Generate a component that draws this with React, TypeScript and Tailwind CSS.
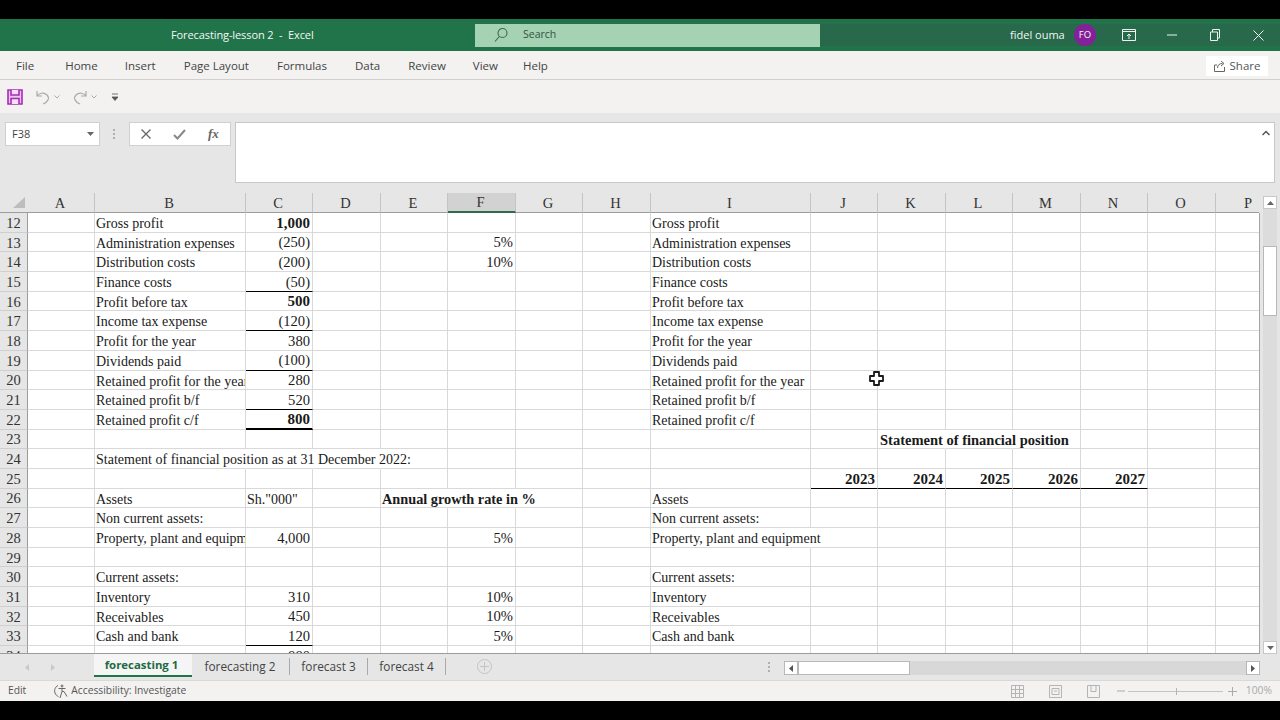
import React from "react";

const ui = "font-['Open_Sans','Noto_Sans',sans-serif]";
const cols = "grid grid-cols-[28px_67px_151px_67px_68px_67px_68px_67px_68px_160px_67px_68px_67px_68px_67px_68px_43px]";

type C = { t: string; r?: boolean; b?: boolean; clip?: boolean; line?: string; cls?: string; span?: number };
type Row = Record<number, C>;
// column index: 1 = A ... 16 = P; span = how many columns the text runs over, so the gridlines it crosses go away
const L = (t: string, span?: number): C => ({ t, span, cls: "pt-[1px]" });
const Clip = (t: string): C => ({ t, clip: true, cls: "pt-[1px]" });
const N = (t: string, line?: string, b?: boolean): C => ({ t, r: true, line, b, cls: b ? "pt-[0.6px] text-[15px]" : "pt-[0.6px] text-[14.6px]" });
const thin = "border-b border-b-black";
const thick = "border-b-2 border-b-black";

const rows: [number, Row][] = [
  [12, { 2: L("Gross profit"), 3: N("1,000", undefined, true), 9: L("Gross profit") }],
  [13, { 2: L("Administration expenses"), 3: N("(250)"), 6: N("5%"), 9: L("Administration expenses") }],
  [14, { 2: L("Distribution costs"), 3: N("(200)"), 6: N("10%"), 9: L("Distribution costs") }],
  [15, { 2: L("Finance costs"), 3: N("(50)", thin), 9: L("Finance costs") }],
  [16, { 2: L("Profit before tax"), 3: N("500", undefined, true), 9: L("Profit before tax") }],
  [17, { 2: L("Income tax expense"), 3: N("(120)", thin), 9: L("Income tax expense") }],
  [18, { 2: L("Profit for the year"), 3: N("380"), 9: L("Profit for the year") }],
  [19, { 2: L("Dividends paid"), 3: N("(100)", thin), 9: L("Dividends paid") }],
  [20, { 2: Clip("Retained profit for the year"), 3: N("280"), 9: L("Retained profit for the year") }],
  [21, { 2: L("Retained profit b/f"), 3: N("520", thin), 9: L("Retained profit b/f") }],
  [22, { 2: L("Retained profit c/f"), 3: N("800", thick, true), 9: L("Retained profit c/f") }],
  [23, { 11: { t: "Statement of financial position", b: true, span: 3, cls: "pl-[2px] pt-[1px] text-[14.5px]" } }],
  [24, { 2: L("Statement of financial position as at 31 December 2022:", 4) }],
  [25, { 10: N("2023", thin, true), 11: N("2024", thin, true), 12: N("2025", thin, true), 13: N("2026", thin, true), 14: N("2027", thin, true) }],
  [26, { 2: L("Assets"), 3: L('Sh."000"'), 5: { t: "Annual growth rate in %", b: true, span: 3, cls: "pt-[1px] text-[14.3px]" }, 9: L("Assets") }],
  [27, { 2: L("Non current assets:"), 9: L("Non current assets:") }],
  [28, { 2: Clip("Property, plant and equipment"), 3: N("4,000"), 6: N("5%"), 9: L("Property, plant and equipment", 2) }],
  [29, {}],
  [30, { 2: L("Current assets:"), 9: L("Current assets:") }],
  [31, { 2: L("Inventory"), 3: N("310"), 6: N("10%"), 9: L("Inventory") }],
  [32, { 2: L("Receivables"), 3: N("450"), 6: N("10%"), 9: L("Receivables") }],
  [33, { 2: L("Cash and bank"), 3: N("120", thin), 6: N("5%"), 9: L("Cash and bank") }],
  [34, { 3: N("880") }],
];

const letters = ["A", "B", "C", "D", "E", "F", "G", "H", "I", "J", "K", "L", "M", "N", "O", "P"];

function Cell({ c, last, covered }: { c?: C; last: boolean; covered: boolean }) {
  const line = c?.line ?? "border-b border-b-[#d9d9d9]";
  return (
    <div className={`h-[19.7px] min-w-0 ${last ? "" : covered ? "border-r border-r-transparent" : "border-r border-r-[#d9d9d9]"} ${line} ${c?.clip ? "overflow-hidden" : ""}`}>
      {c && c.t && (
        <div className={`whitespace-nowrap pl-[1px] pr-[2px] leading-[19px] ${c.r ? "text-right" : "text-left"} ${c.b ? "font-bold" : ""} ${c.cls ?? ""}`}>{c.t}</div>
      )}
    </div>
  );
}

function isCovered(row: Row, i: number) {
  // i is a column index; true when a text that starts at or before i runs past the right edge of i
  for (let s = 1; s <= i; s++) {
    const c = row[s];
    if (c?.span && i < s + c.span - 1) return true;
  }
  return false;
}

function TitleBar() {
  return (
    <div className={`flex h-[32px] items-center bg-[#21734a] text-[#f4f7f5] ${ui}`}>
      <div className="w-[475px] pl-[171px] text-[11px] tracking-[-0.1px]">Forecasting-lesson 2&nbsp; -&nbsp; Excel</div>
      <div className="flex h-[23px] w-[345px] items-center bg-[#a4d2b3] text-[#33523f]">
        <svg className="ml-[18px]" width="16" height="16" viewBox="0 0 16 16" fill="none" stroke="#3b6a4c" strokeWidth="1.1">
          <circle cx="9.5" cy="6" r="4.5" />
          <path d="M6.3 9.5 2 14.5" />
        </svg>
        <span className="ml-[14px] text-[10.5px]">Search</span>
      </div>
      <div className="flex flex-1 items-center bg-[#27694a]">
        <span className="ml-[190px] w-[55px] whitespace-nowrap text-[11px]">fidel ouma</span>
        <div className="ml-[9px] flex h-[22px] w-[22px] items-center justify-center rounded-full bg-[#84209a] text-[9.5px]">FO</div>
        <svg className="ml-[26px]" width="14" height="12" viewBox="0 0 14 12" fill="none" stroke="#eef3f0" strokeWidth="1">
          <path d="M.5.5h13v11H.5zM.5 2.500h13M7 10V5M5 7l2-2 2 2" />
        </svg>
        <svg className="ml-[31px]" width="10" height="2" viewBox="0 0 10 2"><path d="M0 1h10" stroke="#eef3f0" /></svg>
        <svg className="ml-[33px]" width="10" height="12" viewBox="0 0 10 12" fill="none" stroke="#eef3f0">
          <path d="M.5 3h7v8.500h-7zM2.500 3V.5h7v8.500H7.500" />
        </svg>
        <svg className="ml-[33px]" width="11" height="11" viewBox="0 0 11 11" fill="none" stroke="#f4f7f5"><path d="m.5.500 10 10M10.500.5l-10 10" /></svg>
      </div>
    </div>
  );
}

function Tabs() {
  const tabs: [string, string][] = [
    ["File", "ml-[16px]"], ["Home", "ml-[31px]"], ["Insert", "ml-[27px]"], ["Page Layout", "ml-[28px]"],
    ["Formulas", "ml-[28px]"], ["Data", "ml-[28px]"], ["Review", "ml-[28px]"], ["View", "ml-[27px]"], ["Help", "ml-[25px]"],
  ];
  return (
    <div className={`flex h-[29px] items-center border-b border-b-[#d2d0ce] bg-[#f3f2f1] pt-[1px] text-[11.5px] text-[#444] ${ui}`}>
      {tabs.map(([t, m]) => <span key={t} className={m}>{t}</span>)}
      <div className="ml-auto mr-[12px] flex h-[20px] w-[62px] items-center justify-center gap-[4px] bg-white text-[#555]">
        <svg width="12" height="12" viewBox="0 0 12 12" fill="none" stroke="#666"><path d="M3 5H.5v6.500h10V7M3.500 8c0-3 2-4.500 5-4.500M7 1l3 2.500L7 6" /></svg>
        <span>Share</span>
      </div>
    </div>
  );
}

function Qat() {
  return (
    <div className="flex h-[33px] items-center bg-[#f3f2f1]">
      <svg className="ml-[7px]" width="16" height="16" viewBox="0 0 16 16" fill="#edc4f2" stroke="#a72cb8" strokeWidth="1.600">
        <path d="M1 1h14v14H1z" /><path d="M4 1v5h8V1M4 15V9.500h8V15" fill="#f6e3f8" />
      </svg>
      <svg className="ml-[12px]" width="16" height="16" viewBox="0 0 16 16" fill="none" stroke="#aaa" strokeWidth="1.200">
        <path d="M2 2v5h5M2 7c2-3 7-4 10-1 3 3 1 7-4 9" />
      </svg>
      <svg className="ml-[3px]" width="6" height="4" viewBox="0 0 6 4" fill="none" stroke="#aaa"><path d="m.5.500 2.500 2.500L5.500.5" /></svg>
      <svg className="ml-[12px]" width="16" height="16" viewBox="0 0 16 16" fill="none" stroke="#aaa" strokeWidth="1.200">
        <path d="M14 2v5H9M14 7C12 4 7 3 4 6c-3 3-1 7 4 9" />
      </svg>
      <svg className="ml-[3px]" width="6" height="4" viewBox="0 0 6 4" fill="none" stroke="#aaa"><path d="m.5.500 2.500 2.500L5.500.5" /></svg>
      <svg className="ml-[14px]" width="8" height="8" viewBox="0 0 8 8"><path d="M1 1h6M1 4h6L4 7.500z" stroke="#555" fill="#555" strokeWidth=".8" /></svg>
    </div>
  );
}

function FormulaBar() {
  return (
    <div className={`flex h-[80px] items-start bg-[#e6e6e6] pt-[9px] ${ui}`}>
      <div className="ml-[5px] flex h-[24px] w-[95px] items-center border border-[#d0d0d0] bg-white pl-[6px] text-[11px] text-[#444]">
        F38
        <svg className="ml-auto mr-[5px]" width="7" height="4" viewBox="0 0 7 4"><path d="M0 0h7L3.500 4z" fill="#666" /></svg>
      </div>
      <div className="ml-[13px] mt-[7px] flex h-[10px] w-[2px] flex-col justify-between">
        <div className="h-[2px] bg-[#b0b0b0]" /><div className="h-[2px] bg-[#b0b0b0]" /><div className="h-[2px] bg-[#b0b0b0]" />
      </div>
      <div className="ml-[14px] flex h-[24px] w-[102px] items-center border border-[#d0d0d0] bg-white">
        <svg className="ml-[11px]" width="10" height="10" viewBox="0 0 10 10" fill="none" stroke="#666" strokeWidth="1.300"><path d="m.5.500 9 9M9.500.5l-9 9" /></svg>
        <svg className="ml-[22px]" width="13" height="11" viewBox="0 0 13 11" fill="none" stroke="#888" strokeWidth="2"><path d="m1 6 3.500 3.500L12 1" /></svg>
        <span className="ml-[22px] font-['Liberation_Serif',serif] text-[13px] font-bold italic text-[#666]">fx</span>
      </div>
      <div className="relative ml-[4px] h-[61px] w-[1040px] border border-[#c8c8c8] bg-white">
        <svg className="absolute right-[4px] top-[7px]" width="8" height="6" viewBox="0 0 8 6" fill="none" stroke="#555" strokeWidth="1.500"><path d="m.5 5 3.500-3.500L7.500 5" /></svg>
      </div>
    </div>
  );
}

function Sheet() {
  return (
    <div className="flex h-[461px] bg-[#e6e6e6] font-['Liberation_Serif',serif] text-[14px] text-[#1a1a1a]">
      <div className="h-full w-[1260px] overflow-hidden">
        <div className={`${cols} h-[20px] grid-rows-[20px]`}>
          <div className="flex items-start justify-end border-b border-b-[#9c9c9c] pr-[3px] pt-[4px]">
            <svg width="12" height="11" viewBox="0 0 12 11"><path d="M12 0v11H0z" fill="#bdbdbd" /></svg>
          </div>
          {letters.map((l) => (
            <div key={l} className={`flex items-center border-b text-[14.5px] leading-[16px] text-[#333] ${l === "P" ? "justify-start pl-[28px]" : "justify-center border-r border-r-[#c4c4c4] pr-[2px]"} ${l === "F" ? "border-b-2 border-b-[#2d6b4c] bg-[#d2d2d2]" : "border-b-[#9c9c9c]"}`}>{l}</div>
          ))}
        </div>
        <div className="h-[441px] overflow-hidden border-b border-r border-b-[#9c9c9c] border-r-[#a4a4a4] bg-white">
          {rows.map(([n, row]) => (
            <div key={n} className={cols}>
              <div className="flex h-[19.7px] items-center justify-center border-b border-r border-b-[#cfcfcf] border-r-[#9c9c9c] bg-[#e6e6e6] pt-[1px] text-[14.5px] leading-[16px] text-[#333]">{n}</div>
              {letters.map((_, i) => <Cell key={i} c={row[i + 1]} last={i === 15} covered={isCovered(row, i + 1)} />)}
            </div>
          ))}
        </div>
      </div>
      <div className="flex h-full w-[20px] flex-col items-center pt-[3px]">
        <div className="flex h-[13px] w-[14px] shrink-0 items-center justify-center border border-[#c8c8c8] bg-white">
          <svg width="7" height="4" viewBox="0 0 7 4"><path d="M3.500 0 7 4H0z" fill="#666" /></svg>
        </div>
        <div className="w-[14px] flex-1 bg-[#dcdcdc] pt-[37px]">
          <div className="h-[70px] w-[14px] border border-[#b8b8b8] bg-white" />
        </div>
        <div className="flex h-[13px] w-[14px] shrink-0 items-center justify-center border border-[#c8c8c8] bg-white">
          <svg width="7" height="4" viewBox="0 0 7 4"><path d="M0 0h7L3.500 4z" fill="#666" /></svg>
        </div>
      </div>
    </div>
  );
}

function SheetTabs() {
  return (
    <div className={`flex h-[26px] items-start bg-[#e6e6e6] text-[11.8px] text-[#444] ${ui}`}>
      <svg className="ml-[25px] mt-[10px]" width="4" height="7" viewBox="0 0 4 7"><path d="M4 0v7L0 3.500z" fill="#c8c8c8" /></svg>
      <svg className="ml-[22px] mt-[10px]" width="4" height="7" viewBox="0 0 4 7"><path d="M0 0v7l4-3.500z" fill="#c8c8c8" /></svg>
      <div className="ml-[39px] flex h-[23px] w-[98px] items-center justify-center border-b-2 border-b-[#21734a] bg-[#f5f5f5] pr-[3px] pt-[1px] text-[11.4px] font-bold text-[#1f6a44]">forecasting 1</div>
      <div className="mt-[4px] flex h-[17px] w-[98px] items-center justify-center border-r border-r-[#aaa] pr-[1px] pt-[1px]">forecasting 2</div>
      <div className="mt-[4px] flex h-[17px] w-[78px] items-center justify-center border-r border-r-[#aaa] pt-[1px]">forecast 3</div>
      <div className="mt-[4px] flex h-[17px] w-[78px] items-center justify-center border-r border-r-[#aaa] pt-[1px]">forecast 4</div>
      <div className="ml-[31px] mt-[5px] flex h-[15px] w-[15px] items-center justify-center rounded-full border border-[#c4c4c4] text-[#c4c4c4]">
        <svg width="9" height="9" viewBox="0 0 9 9"><path d="M4.500 0v9M0 4.500h9" stroke="#c4c4c4" /></svg>
      </div>
      <div className="ml-[276px] mt-[8px] flex h-[10px] w-[2px] flex-col justify-between">
        <div className="h-[2px] bg-[#b0b0b0]" /><div className="h-[2px] bg-[#b0b0b0]" /><div className="h-[2px] bg-[#b0b0b0]" />
      </div>
      <div className="ml-[14px] mt-[7px] flex h-[14px] w-[476px] bg-[#d8d8d8]">
        <div className="flex h-[14px] w-[14px] items-center justify-center border border-[#b8b8b8] bg-white">
          <svg width="4" height="7" viewBox="0 0 4 7"><path d="M4 0v7L0 3.500z" fill="#555" /></svg>
        </div>
        <div className="h-[14px] w-[112px] border border-[#b8b8b8] bg-white" />
        <div className="ml-auto flex h-[14px] w-[14px] items-center justify-center border border-[#b8b8b8] bg-white">
          <svg width="4" height="7" viewBox="0 0 4 7"><path d="M0 0v7l4-3.500z" fill="#555" /></svg>
        </div>
      </div>
    </div>
  );
}

function StatusBar() {
  return (
    <div className={`flex h-[21px] items-center border-t border-t-[#d8d8d8] bg-[#f3f2f1] text-[10.3px] text-[#555] ${ui}`}>
      <span className="ml-[8px]">Edit</span>
      <svg className="ml-[27px]" width="15" height="15" viewBox="0 0 15 15" fill="none" stroke="#666" strokeWidth="1">
        <circle cx="9" cy="2" r="1" /><path d="M5.500 4.500h7M9 4.500v3M7 14l2-6.500 2 0 3 5M5 1.500C2 3 1 6 2 9c.5 1.500 2 3 3.500 3.500" />
      </svg>
      <span className="ml-[3px]">Accessibility: Investigate</span>
      <svg className="ml-auto" width="13" height="13" viewBox="0 0 13 13" fill="none" stroke="#b4b4b4"><path d="M.5.500h12v12H.5zM.5 4.500h12M.5 8.500h12M4.500.5v12M8.500.5v12" /></svg>
      <svg className="ml-[25px]" width="13" height="13" viewBox="0 0 13 13" fill="none" stroke="#b4b4b4"><path d="M.5.500h12v12H.5zM3 3.500h7v6H3zM5 6h3" /></svg>
      <svg className="ml-[25px]" width="13" height="13" viewBox="0 0 13 13" fill="none" stroke="#b4b4b4"><path d="M.5.500h12v12H.5zM4 .5v6h5V.5" /></svg>
      <svg className="ml-[17px]" width="8" height="2" viewBox="0 0 8 2"><path d="M0 1h8" stroke="#aaa" /></svg>
      <div className="relative ml-[3px] h-[1px] w-[95px] bg-[#c4c4c4]">
        <div className="absolute left-[48px] top-[-3px] h-[7px] w-[1px] bg-[#b4b4b4]" />
      </div>
      <svg className="ml-[5px]" width="9" height="9" viewBox="0 0 9 9"><path d="M4.500 0v9M0 4.500h9" stroke="#aaa" /></svg>
      <span className="ml-[9px] mr-[8px] text-[#aaa]">100%</span>
    </div>
  );
}

export default function App() {
  return (
    <div className="relative flex h-[720px] w-[1280px] flex-col overflow-hidden bg-black">
      <div className="h-[19px] shrink-0" />
      <TitleBar />
      <Tabs />
      <Qat />
      <FormulaBar />
      <Sheet />
      <SheetTabs />
      <StatusBar />
      <div className="flex-1" />
      <svg className="absolute left-[869px] top-[371px]" width="15" height="15" viewBox="0 0 15 15">
        <path d="M5 1h5v4h4v5h-4v4H5v-4H1V5h4z" fill="#fff" stroke="#1a1a1a" strokeWidth="1.800" strokeLinejoin="round" />
      </svg>
    </div>
  );
}
